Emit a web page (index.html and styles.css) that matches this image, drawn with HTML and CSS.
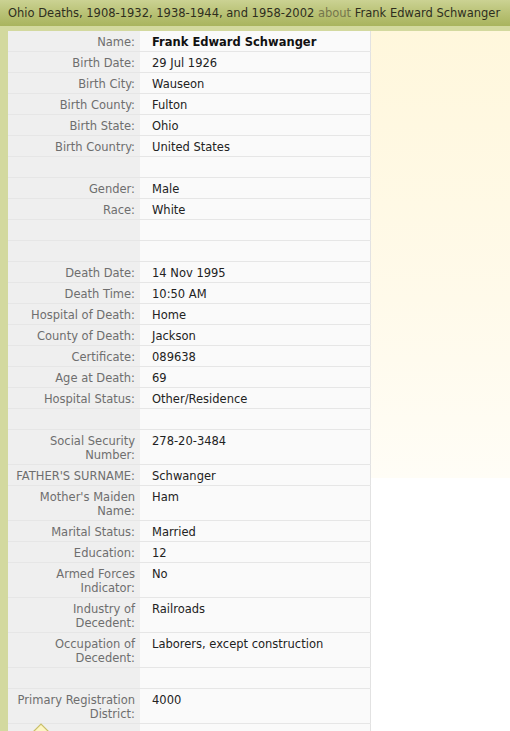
FILE: index.html
```html
<!DOCTYPE html>
<html>
<head>
<meta charset="utf-8">
<link rel="stylesheet" href="styles.css">
</head>
<body>
<div class="header">Ohio Deaths, 1908-1932, 1938-1944, and 1958-2002 <span class="about">about</span> Frank Edward Schwanger</div>
<div class="main">
  <div class="rail"></div>
  <table class="record">
    <tr><th>Name:</th><td class="name">Frank Edward Schwanger</td></tr>
    <tr><th>Birth Date:</th><td>29 Jul 1926</td></tr>
    <tr><th>Birth City:</th><td>Wauseon</td></tr>
    <tr><th>Birth County:</th><td>Fulton</td></tr>
    <tr><th>Birth State:</th><td>Ohio</td></tr>
    <tr><th>Birth Country:</th><td>United States</td></tr>
    <tr><th></th><td></td></tr>
    <tr><th>Gender:</th><td>Male</td></tr>
    <tr><th>Race:</th><td>White</td></tr>
    <tr><th></th><td></td></tr>
    <tr><th></th><td></td></tr>
    <tr><th>Death Date:</th><td>14 Nov 1995</td></tr>
    <tr><th>Death Time:</th><td>10:50 AM</td></tr>
    <tr><th>Hospital of Death:</th><td>Home</td></tr>
    <tr><th>County of Death:</th><td>Jackson</td></tr>
    <tr><th>Certificate:</th><td>089638</td></tr>
    <tr><th>Age at Death:</th><td>69</td></tr>
    <tr><th>Hospital Status:</th><td>Other/Residence</td></tr>
    <tr><th></th><td></td></tr>
    <tr><th>Social Security Number:</th><td>278-20-3484</td></tr>
    <tr><th>FATHER'S SURNAME:</th><td>Schwanger</td></tr>
    <tr><th>Mother's Maiden Name:</th><td>Ham</td></tr>
    <tr><th>Marital Status:</th><td>Married</td></tr>
    <tr><th>Education:</th><td>12</td></tr>
    <tr><th>Armed Forces Indicator:</th><td>No</td></tr>
    <tr><th>Industry of Decedent:</th><td>Railroads</td></tr>
    <tr><th>Occupation of Decedent:</th><td>Laborers, except construction</td></tr>
    <tr><th></th><td></td></tr>
    <tr><th>Primary Registration District:</th><td>4000</td></tr>
    <tr><th></th><td></td></tr>
  </table>
  <div class="aside"></div>
  <svg class="pointer" width="26" height="14" viewBox="0 0 26 14"><path d="M1 13 L13 1 L25 13" fill="#fdf6c4" stroke="#c9bf6a" stroke-width="1.2"/></svg>
</div>
</body>
</html>
```
FILE: styles.css
```css
html, body {
  margin: 0;
  padding: 0;
  background: #fff;
  font-family: "DejaVu Sans", Verdana, sans-serif;
}
.header {
  height: 26px;
  line-height: 27px;
  padding-left: 8px;
  font-size: 11.5px;
  color: #2e2e1e;
  white-space: nowrap;
  overflow: hidden;
  background: linear-gradient(#cbd293, #b9c276 50%, #a9b45e);
}
.about {
  color: #75764c;
}
.main {
  position: relative;
  display: flex;
  align-items: flex-start;
  border-top: 5px solid #d3d99f;
}
.rail {
  width: 8px;
  align-self: stretch;
  background: #d3d99f;
}
.record {
  width: 363px;
  border-collapse: collapse;
  font-size: 11.5px;
  line-height: 14px;
  border-right: 1px solid #e2e2e2;
}
.record th, .record td {
  height: 14px;
  padding: 4px 0 2px;
  border-bottom: 1px solid #e6e6e6;
  vertical-align: top;
}
.record th {
  width: 120px;
  padding-left: 7px;
  padding-right: 5px;
  text-align: right;
  font-weight: normal;
  color: #6e6e6e;
  background: #efefef;
}
.record td {
  padding-left: 12px;
  color: #222;
  background: #fafafa;
}
.record td.name {
  font-weight: bold;
  color: #111;
}
.aside {
  flex: 1;
  height: 447px;
  background: linear-gradient(#fff7dc, #fffaea 60%, #fffdf6);
}
.pointer {
  position: absolute;
  left: 28px;
  top: 692px;
}
```
